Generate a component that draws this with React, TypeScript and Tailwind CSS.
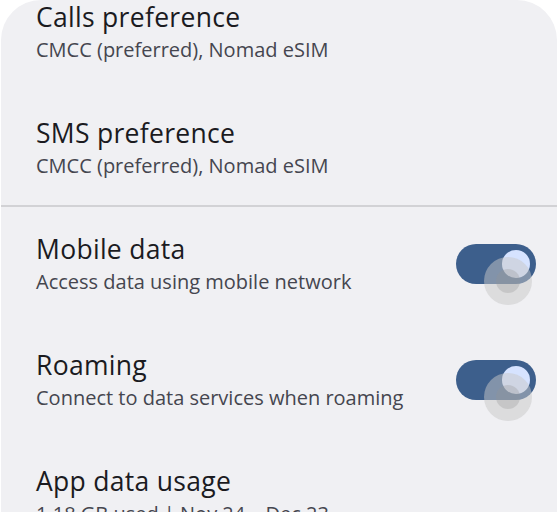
import React from "react";

interface RowProps {
  title: string;
  subtitle: string;
  toggle?: boolean;
}

function Toggle() {
  return (
    <div className="relative w-[80px] h-[40px] rounded-full bg-[#3d5f8c] shrink-0">
      {/* thumb */}
      <div className="absolute right-[6px] top-[6px] w-[28px] h-[28px] rounded-full bg-[#d6e3ff]" />
      {/* touch indicator */}
      <div className="absolute left-[28px] top-[13px] w-[48px] h-[48px] rounded-full bg-[rgba(200,200,200,0.5)] flex items-center justify-center">
        <div className="w-[24px] h-[24px] rounded-full bg-[rgba(150,150,150,0.3)]" />
      </div>
    </div>
  );
}

function Row({ title, subtitle, toggle }: RowProps) {
  return (
    <div className="h-[116px] flex items-center justify-between pl-[35px] pr-[21px]">
      <div className="flex flex-col">
        <span className="text-[26.5px] leading-[36px] tracking-[0.3px] text-[#1b1b1f] whitespace-nowrap">{title}</span>
        <span className="text-[20px] leading-[30px] text-[#45464f] whitespace-nowrap">{subtitle}</span>
      </div>
      {toggle && <Toggle />}
    </div>
  );
}

export default function App() {
  return (
    <div
      className="w-[559px] h-[512px] overflow-hidden bg-white"
      style={{ fontFamily: "'Open Sans', Roboto, sans-serif" }}
    >
      <div className="ml-[1px] w-[556px] h-full rounded-t-[40px] bg-[#f0f0f3] overflow-hidden">
        <div className="-mt-[26px]">
          <Row title="Calls preference" subtitle="CMCC (preferred), Nomad eSIM" />
          <Row title="SMS preference" subtitle="CMCC (preferred), Nomad eSIM" />
          <div className="h-[2px] -my-[1px] relative bg-[#d2d2d5]" />
          <Row title="Mobile data" subtitle="Access data using mobile network" toggle />
          <Row title="Roaming" subtitle="Connect to data services when roaming" toggle />
          <Row title="App data usage" subtitle="1.18 GB used | Nov 24 – Dec 23" />
        </div>
      </div>
    </div>
  );
}
